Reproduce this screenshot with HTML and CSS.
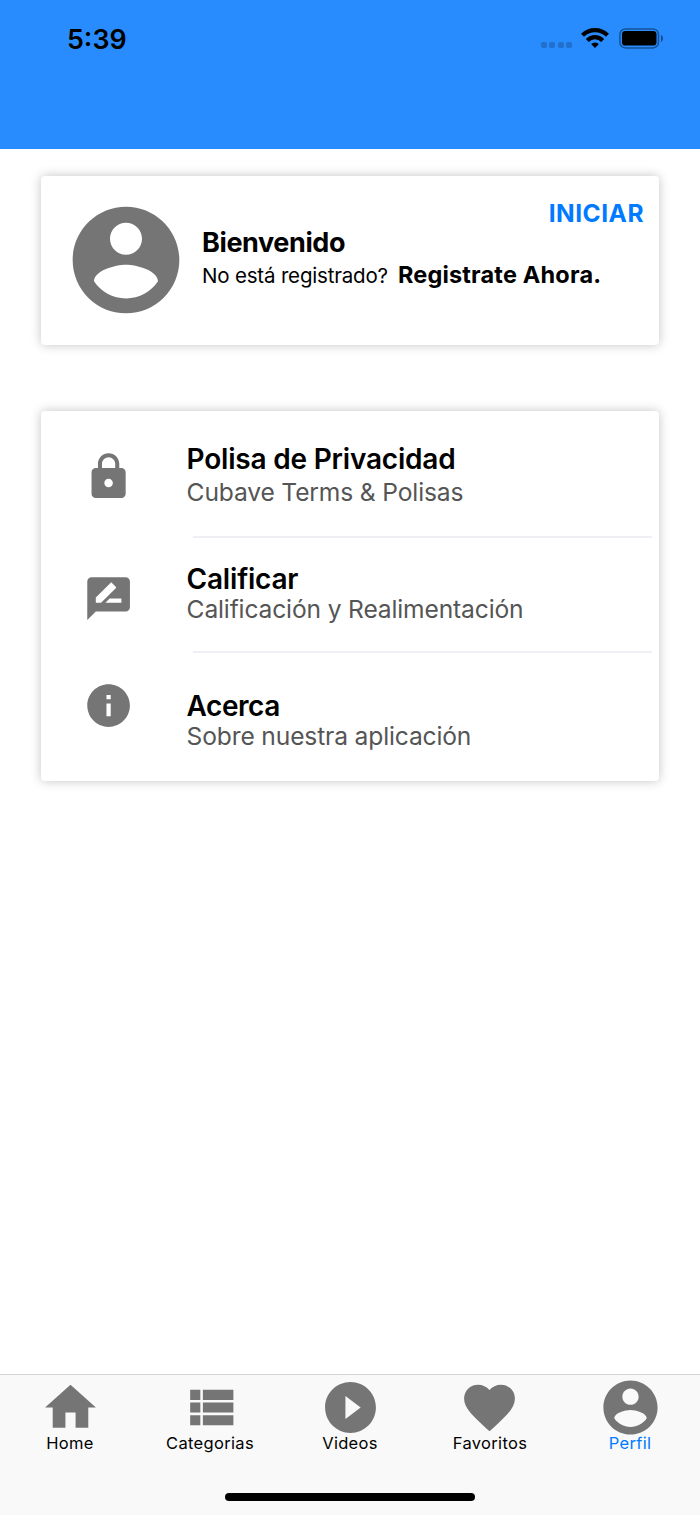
FILE: index.html
```html
<!DOCTYPE html>
<html lang="es">
<head>
    <meta charset="UTF-8">
    <meta name="viewport" content="width=device-width, initial-scale=1.0">
    <title>Perfil</title>
    <link rel="stylesheet" href="styles.css">
</head>
<body>
    <!-- Barra de estado -->
    <header class="header">
        <div class="time">5:39</div>
        <div class="status-icons">
            <div class="dots"><i></i><i></i><i></i><i></i></div>
            <svg class="wifi" viewBox="0 0 28 20">
                <path d="M1.500 7.300a17.700 17.700 0 0 1 25 0" fill="none" stroke="#000" stroke-width="4.200"/>
                <path d="M6.300 12.400a10.900 10.900 0 0 1 15.400 0" fill="none" stroke="#000" stroke-width="4.200"/>
                <path d="M14 20l-3.900-3.900a5.600 5.600 0 0 1 7.800 0z"/>
            </svg>
            <svg class="battery" viewBox="0 0 44 21">
                <rect x="0.9" y="0.9" width="38.6" height="19" rx="5.5" fill="none" stroke="#000" stroke-opacity="0.42" stroke-width="1.5"/>
                <rect x="3" y="3" width="34.5" height="14.6" rx="3.4"/>
                <path d="M42 7v7c1.200-.6 2-1.900 2-3.500S43.200 7.600 42 7z" fill-opacity="0.45"/>
            </svg>
        </div>
    </header>

    <main class="content">
        <!-- Bienvenida -->
        <section class="card welcome">
            <svg class="avatar" viewBox="0 0 24 24"><path d="M12 2C6.480 2 2 6.480 2 12s4.480 10 10 10 10-4.480 10-10S17.520 2 12 2zm0 3c1.660 0 3 1.340 3 3s-1.340 3-3 3-3-1.340-3-3 1.340-3 3-3zm0 14.200c-2.500 0-4.710-1.280-6-3.220.030-1.990 4-3.080 6-3.080 1.990 0 5.970 1.090 6 3.080-1.290 1.940-3.500 3.220-6 3.220z"/></svg>
            <div class="welcome-text">
                <a class="login">INICIAR</a>
                <h1 class="welcome-title">Bienvenido</h1>
                <p class="register"><span class="question">No está registrado?</span><a class="register-link">Registrate Ahora.</a></p>
            </div>
        </section>

        <!-- Opciones -->
        <section class="card options">
            <div class="option privacy">
                <svg class="option-icon" viewBox="0 0 24 24"><path d="M18 8h-1V6c0-2.760-2.240-5-5-5S7 3.240 7 6v2H6c-1.100 0-2 .9-2 2v10c0 1.100.9 2 2 2h12c1.100 0 2-.9 2-2V10c0-1.100-.9-2-2-2zm-6 9c-1.100 0-2-.9-2-2s.9-2 2-2 2 .9 2 2-.9 2-2 2zm3.100-9H8.900V6c0-1.710 1.390-3.100 3.100-3.100s3.100 1.390 3.100 3.100v2z"/></svg>
                <div class="option-text">
                    <h2>Polisa de Privacidad</h2>
                    <p>Cubave Terms &amp; Polisas</p>
                </div>
            </div>
            <div class="divider"></div>
            <div class="option rate">
                <svg class="option-icon" viewBox="0 0 24 24"><path d="M20 2H4c-1.100 0-1.990.9-1.990 2L2 22l4-4h14c1.100 0 2-.9 2-2V4c0-1.100-.9-2-2-2zM6 14v-2.470l6.880-6.880c.2-.2.510-.2.710 0l1.770 1.770c.2.2.2.510 0 .710L8.470 14H6zm12 0h-7.500l2-2H18v2z"/></svg>
                <div class="option-text">
                    <h2>Calificar</h2>
                    <p>Calificación y Realimentación</p>
                </div>
            </div>
            <div class="divider"></div>
            <div class="option about">
                <svg class="option-icon" viewBox="0 0 24 24"><path d="M12 2C6.480 2 2 6.480 2 12s4.480 10 10 10 10-4.480 10-10S17.520 2 12 2zm1 15h-2v-6h2v6zm0-8h-2V7h2v2z"/></svg>
                <div class="option-text">
                    <h2>Acerca</h2>
                    <p>Sobre nuestra aplicación</p>
                </div>
            </div>
        </section>
    </main>

    <!-- Menú inferior -->
    <footer class="footer">
        <nav class="tabs">
            <a class="tab"><svg viewBox="0 0 24 24"><path d="M10 20v-6h4v6h5v-8h3L12 3 2 12h3v8z"/></svg>Home</a>
            <a class="tab"><svg viewBox="0 0 24 24"><path d="M4 14h4v-4H4v4zm0 5h4v-4H4v4zM4 9h4V5H4v4zm5 5h12v-4H9v4zm0 5h12v-4H9v4zM9 5v4h12V5H9z"/></svg>Categorias</a>
            <a class="tab"><svg viewBox="0 0 24 24"><path d="M12 2C6.480 2 2 6.480 2 12s4.480 10 10 10 10-4.480 10-10S17.520 2 12 2zm-2 14.500v-9l6 4.500-6 4.500z"/></svg>Videos</a>
            <a class="tab favorites"><svg viewBox="0 0 24 24"><path d="M12 21.350l-1.450-1.320C5.400 15.360 2 12.280 2 8.500 2 5.420 4.420 3 7.500 3c1.740 0 3.410.810 4.500 2.090C13.090 3.810 14.760 3 16.500 3 19.580 3 22 5.420 22 8.500c0 3.780-3.400 6.860-8.550 11.540L12 21.350z"/></svg>Favoritos</a>
            <a class="tab active"><svg viewBox="0 0 24 24"><path d="M12 2C6.480 2 2 6.480 2 12s4.480 10 10 10 10-4.480 10-10S17.520 2 12 2zm0 3c1.660 0 3 1.340 3 3s-1.340 3-3 3-3-1.340-3-3 1.340-3 3-3zm0 14.200c-2.500 0-4.710-1.280-6-3.220.030-1.990 4-3.080 6-3.080 1.990 0 5.970 1.090 6 3.080-1.290 1.940-3.500 3.220-6 3.220z"/></svg>Perfil</a>
        </nav>
        <div class="home-indicator"></div>
    </footer>
</body>
</html>
```
FILE: styles.css
```css
* {
    box-sizing: border-box;
}

body {
    margin: 0;
    height: 1515px;
    display: flex;
    flex-direction: column;
    background: #fff;
    color: #000;
    font-family: Inter, "Liberation Sans", sans-serif;
    overflow: hidden;
}

h1, h2, p {
    margin: 0;
}

svg {
    display: block;
    flex: none;
}

/* Barra de estado */
.header {
    height: 149px;
    padding: 23px 37px 0 67px;
    display: flex;
    justify-content: space-between;
    align-items: flex-start;
    background: #288cff;
}

.time {
    font-size: 26.8px;
    line-height: 32px;
    font-weight: 600;
}

.status-icons {
    display: flex;
    align-items: flex-start;
    padding-top: 5px;
}

.dots {
    display: flex;
    gap: 2.6px;
    margin: 14px 8.6px 0 0;
}

.dots i {
    width: 6px;
    height: 6px;
    border-radius: 2px;
    background: #2070cc;
}

.wifi {
    width: 28px;
    height: 20px;
    margin-right: 10px;
}

.battery {
    width: 44px;
    height: 21px;
}

/* Tarjetas */
.content {
    flex: 1;
    padding: 27px 41px 0;
}

.card {
    background: #fff;
    border-radius: 4px;
    box-shadow: 0 0 11px rgba(0, 0, 0, 0.24);
}

.welcome {
    height: 169px;
    padding: 20px 15px 0 21px;
    display: flex;
    align-items: flex-start;
}

.avatar {
    width: 128px;
    height: 128px;
    fill: #757575;
}

.welcome-text {
    flex: 1;
    display: flex;
    flex-direction: column;
    padding: 2px 0 0 12px;
}

.login {
    align-self: flex-end;
    color: #007aff;
    font-size: 24.5px;
    line-height: 30px;
    font-weight: 700;
    letter-spacing: 0.5px;
}

.welcome-title {
    font-size: 27px;
    line-height: 30px;
    font-weight: 700;
    letter-spacing: -0.4px;
}

.register {
    display: flex;
    align-items: baseline;
    margin-top: 3px;
    line-height: 28px;
    white-space: nowrap;
}

.question {
    margin-right: 10px;
    font-size: 20.5px;
    letter-spacing: -0.18px;
}

.register-link {
    font-size: 23.5px;
    font-weight: 700;
    letter-spacing: 0.18px;
}

/* Opciones */
.options {
    height: 370px;
    margin-top: 66px;
}

.option {
    display: flex;
    align-items: flex-start;
    padding-left: 41.7px;
}

.option-icon {
    width: 51.2px;
    height: 51.2px;
    fill: #757575;
}

.option-text {
    padding-left: 52.7px;
}

.option-text h2 {
    font-size: 28px;
    line-height: 31px;
    font-weight: 600;
    letter-spacing: -0.2px;
}

.option-text p {
    color: #555;
    font-size: 24.6px;
    line-height: 30px;
    letter-spacing: -0.15px;
}

.privacy {
    height: 125px;
}

.privacy .option-icon {
    margin-top: 40.4px;
}

.privacy .option-text {
    padding-top: 33px;
}

.privacy p {
    margin-top: 2px;
}

.rate {
    height: 113px;
}

.rate .option-icon {
    margin-top: 34.6px;
}

.rate .option-text {
    padding-top: 26px;
}

.rate p,
.about p {
    margin-top: -1px;
}

.about .option-icon {
    margin-top: 26.5px;
}

.about .option-text {
    padding-top: 38px;
}

.about h2 {
    letter-spacing: -0.45px;
}

.divider {
    height: 2px;
    margin: 0 7px 0 152px;
    background: #efeff4;
}

/* Menú inferior */
.footer {
    height: 141px;
    background: #f9f9f9;
    border-top: 1px solid #d4d4d4;
}

.tabs {
    display: flex;
    height: 118px;
}

.tab {
    flex: 1;
    display: flex;
    flex-direction: column;
    align-items: center;
    font-size: 16.5px;
    line-height: 20px;
    letter-spacing: 0.32px;
}

.tab svg {
    width: 61px;
    height: 61px;
    margin: 2px 0 -5px;
    fill: #757575;
}

.tab.favorites svg {
    margin-right: 1px;
}

.tab.active {
    color: #007aff;
}

.tab.active svg {
    width: 65px;
    height: 65px;
    margin: 0 0 -7px;
}

.home-indicator {
    width: 250px;
    height: 8px;
    margin: 0 auto;
    border-radius: 4px;
    background: #000;
}
```
